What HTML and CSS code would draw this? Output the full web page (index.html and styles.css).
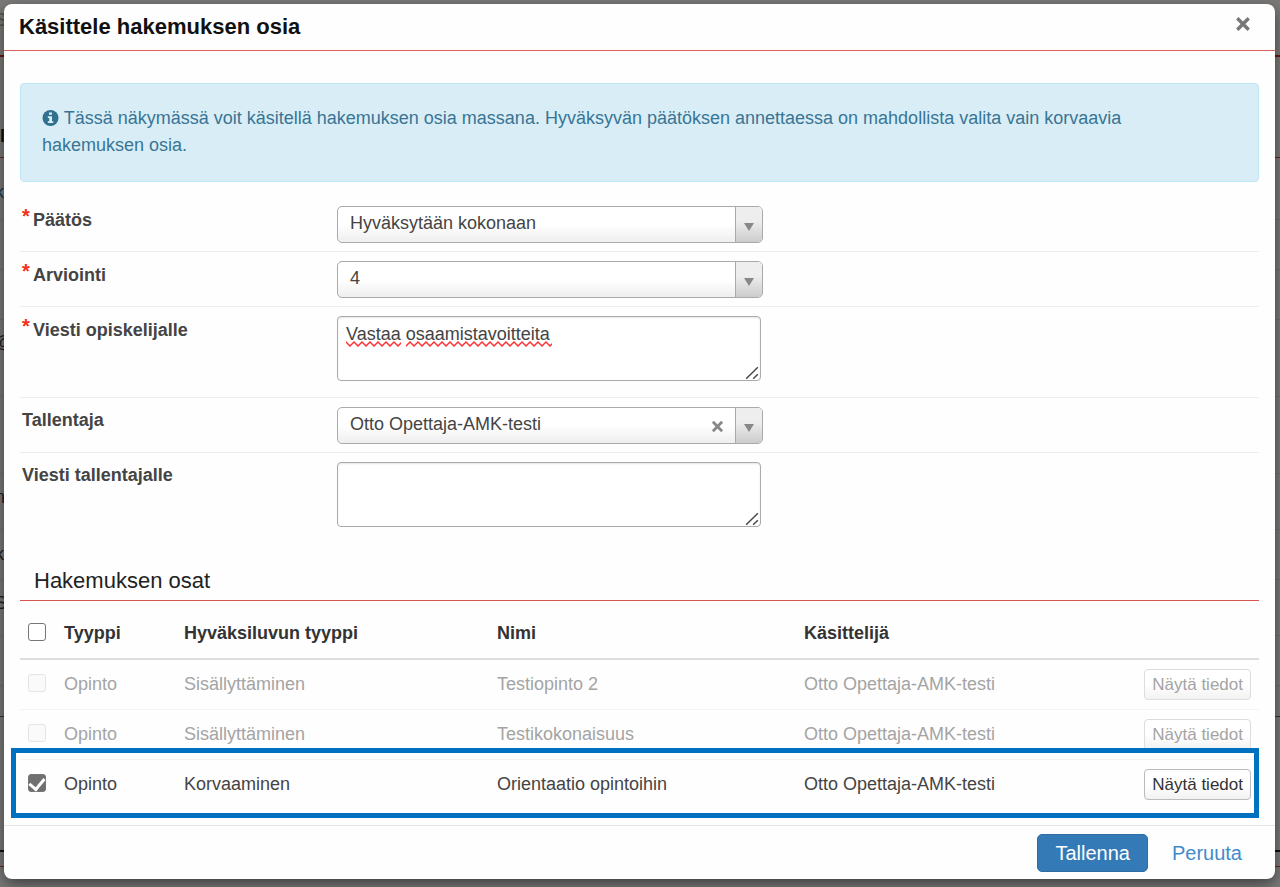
FILE: index.html
```html
<!DOCTYPE html>
<html lang="fi">
<head>
<meta charset="utf-8">
<meta name="viewport" content="width=device-width, initial-scale=1">
<title>Käsittele hakemuksen osia</title>
<link rel="stylesheet" href="styles.css">
</head>
<body>
<div class="page-behind" aria-hidden="true">
  <div class="behind-row behind-top">s</div>
  <div class="behind-row behind-title">I</div>
  <div class="behind-row behind-link">k</div>
  <div class="behind-row"></div>
  <div class="behind-row"></div>
  <div class="behind-row behind-tall">@</div>
  <div class="behind-row behind-tall">i</div>
  <div class="behind-row behind-text">n</div>
  <div class="behind-row">k</div>
  <div class="behind-row behind-text">S</div>
  <div class="behind-row"></div>
  <div class="behind-row behind-end"></div>
  <div class="behind-row behind-dark"></div>
  <div class="behind-row behind-red"></div>
</div>

<div class="modal" role="dialog" aria-labelledby="dialog-title">
  <header class="modal-header">
    <h1 class="modal-title" id="dialog-title">Käsittele hakemuksen osia</h1>
    <button class="icon-button" type="button" aria-label="Sulje">
      <svg class="cross" viewBox="0 0 14 14"><path d="M2 2L12 12M12 2L2 12"/></svg>
    </button>
  </header>

  <form class="modal-form">
    <div class="modal-body">
      <div class="alert">
        <svg class="info-icon" viewBox="0 0 16 16"><circle cx="8" cy="8" r="8"/><path d="M6.500 2.500h3v2.300h-3zM5.300 6.200h4.200v5h1.300v1.800h-5.500v-1.800h1.400v-3.200h-1.400z"/></svg>
        Tässä näkymässä voit käsitellä hakemuksen osia massana. Hyväksyvän päätöksen annettaessa on mahdollista valita vain korvaavia hakemuksen osia.
      </div>

      <div class="form-row">
        <label class="form-label" for="decision"><span class="required">*</span>Päätös</label>
        <div class="select-box">
          <select class="select" id="decision"><option>Hyväksytään kokonaan</option></select>
          <span class="select-arrow"></span>
        </div>
      </div>
      <div class="form-row">
        <label class="form-label" for="grade"><span class="required">*</span>Arviointi</label>
        <div class="select-box">
          <select class="select" id="grade"><option>4</option></select>
          <span class="select-arrow"></span>
        </div>
      </div>
      <div class="form-row form-row-text">
        <label class="form-label" for="student-message"><span class="required">*</span>Viesti opiskelijalle</label>
        <div class="text-box">
          <textarea class="textarea" id="student-message" spellcheck="false">Vastaa osaamistavoitteita</textarea>
          <svg class="spelling" aria-hidden="true">
            <defs><pattern id="wave" width="8" height="6" patternUnits="userSpaceOnUse"><path d="M-1 0L0 1L4 5L8 1L9 0"/></pattern></defs>
            <rect x="0" width="55" height="6" fill="url(#wave)"/>
            <rect x="60" width="146" height="6" fill="url(#wave)"/>
          </svg>
          <svg class="grip" viewBox="0 0 12 12" aria-hidden="true"><path d="M1 11L11 1M7 11L11 7"/></svg>
        </div>
      </div>
      <div class="form-row">
        <label class="form-label" for="recorder">Tallentaja</label>
        <div class="select-box">
          <select class="select" id="recorder"><option>Otto Opettaja-AMK-testi</option></select>
          <button class="icon-button select-clear" type="button" aria-label="Tyhjennä">
            <svg class="cross cross-small" viewBox="0 0 14 14"><path d="M2 2L12 12M12 2L2 12"/></svg>
          </button>
          <span class="select-arrow"></span>
        </div>
      </div>
      <div class="form-row form-row-text form-row-last">
        <label class="form-label" for="recorder-message">Viesti tallentajalle</label>
        <div class="text-box">
          <textarea class="textarea" id="recorder-message"></textarea>
          <svg class="grip" viewBox="0 0 12 12" aria-hidden="true"><path d="M1 11L11 1M7 11L11 7"/></svg>
        </div>
      </div>

      <h2 class="section-title">Hakemuksen osat</h2>
      <div class="table-box">
        <table class="parts">
          <colgroup><col class="col-check"><col class="col-type"><col class="col-kind"><col class="col-name"><col><col class="col-action"></colgroup>
          <thead>
            <tr><th><input class="check" type="checkbox" aria-label="Valitse kaikki"></th><th>Tyyppi</th><th>Hyväksiluvun tyyppi</th><th>Nimi</th><th>Käsittelijä</th><th></th></tr>
          </thead>
          <tbody>
            <tr class="disabled"><td><input class="check" type="checkbox" aria-label="Valitse Testiopinto 2" disabled></td><td>Opinto</td><td>Sisällyttäminen</td><td>Testiopinto 2</td><td>Otto Opettaja-AMK-testi</td><td class="action"><button class="small-button" type="button">Näytä tiedot</button></td></tr>
            <tr class="disabled"><td><input class="check" type="checkbox" aria-label="Valitse Testikokonaisuus" disabled></td><td>Opinto</td><td>Sisällyttäminen</td><td>Testikokonaisuus</td><td>Otto Opettaja-AMK-testi</td><td class="action"><button class="small-button" type="button">Näytä tiedot</button></td></tr>
            <tr><td><input class="check" type="checkbox" aria-label="Valitse Orientaatio opintoihin" checked></td><td>Opinto</td><td>Korvaaminen</td><td>Orientaatio opintoihin</td><td>Otto Opettaja-AMK-testi</td><td class="action"><button class="small-button" type="button">Näytä tiedot</button></td></tr>
          </tbody>
        </table>
        <div class="highlight"></div>
      </div>
    </div>

    <footer class="modal-footer">
      <button class="save" type="submit">Tallenna</button>
      <button class="cancel" type="button">Peruuta</button>
    </footer>
  </form>
</div>
</body>
</html>
```
FILE: styles.css
```css
* { box-sizing: border-box; }

body {
  margin: 0;
  min-height: 100vh;
  background: #7c7b7a;
  color: #444;
  font: 18px/27px "Liberation Sans", Arial, sans-serif;
  overflow: hidden;
}

button, select, textarea { font: inherit; color: inherit; }

/* Page seen around the dialog's edges */
.page-behind {
  position: absolute;
  inset: 0;
  display: flex;
  flex-direction: column;
  overflow: hidden;
}
.behind-row {
  flex: none;
  display: flex;
  align-items: center;
  height: 50px;
  color: #222;
  text-indent: -5px;
  border-bottom: 1px solid #71706f;
}
.behind-top { height: 57px; padding-bottom: 20px; color: #5c5448; font-size: 24px; border-bottom: 2px solid #6b1414; }
.behind-title { height: 101px; padding-top: 58px; color: #111; font-weight: bold; text-indent: 0; border-color: #6b2626; }
.behind-link { height: 62px; padding-top: 8px; color: #173c54; }
.behind-tall { height: 77px; padding-bottom: 31px; }
.behind-text { height: 56px; padding-bottom: 9px; }
.behind-end { height: 31px; border-color: #333; }
.behind-dark { height: 135px; border-bottom: 2px solid #111; }
.behind-red { height: 15px; border-color: #6b2626; }

.modal {
  position: relative;
  margin: 4px 5px 8px 4px;
  background: #fefefe;
  border-radius: 8px;
  box-shadow: 0 5px 15px rgba(0, 0, 0, .5);
}
.modal-header {
  display: flex;
  align-items: center;
  justify-content: space-between;
  height: 47px;
  padding: 0 24px 2px 15px;
  border-bottom: 1px solid #dd6262;
}
.modal-title { margin: 0; color: #111; font-size: 22px; font-weight: bold; }
.icon-button {
  display: flex;
  padding: 0;
  border: 0;
  background: none;
}
.modal-header .icon-button { margin-bottom: 4px; }
.cross { width: 16px; height: 16px; fill: none; stroke: #777; stroke-width: 3; }
.cross-small { width: 13px; height: 13px; stroke: #888; }

.modal-body { padding: 32px 16px 0; }
.alert {
  margin-bottom: 15px;
  padding: 21px 48px 22px 21px;
  border: 1px solid #bce8f1;
  border-radius: 4px;
  background: #d9edf7;
  color: #387594;
}
.info-icon { width: 17px; height: 16px; vertical-align: -2px; fill: #31708f; }
.info-icon path { fill: #d9edf7; }

.form-row {
  display: grid;
  grid-template-columns: 317px 426px;
  align-items: start;
  padding: 9px 0 8px;
  border-bottom: 1px solid #eee;
}
.form-row-text { padding-bottom: 16px; }
.form-row-last { padding-bottom: 0; border: 0; }
.form-label { padding-left: 2px; font-weight: bold; }
.required {
  display: inline-block;
  width: 11px;
  color: #f52d1c;
  font-size: 20px;
  line-height: 20px;
  vertical-align: 3px;
}
.select-box, .text-box { position: relative; }
.select-box { height: 37px; }
.select {
  width: 100%;
  height: 37px;
  padding: 0 60px 2px 12px;
  border: 1px solid #aaa;
  border-radius: 5px;
  appearance: none;
  background: linear-gradient(#fff 50%, #eee);
}
.select-arrow {
  position: absolute;
  top: 1px;
  right: 1px;
  bottom: 1px;
  display: flex;
  align-items: center;
  justify-content: center;
  width: 27px;
  padding-top: 5px;
  border-left: 1px solid #aaa;
  border-radius: 0 4px 4px 0;
  background: linear-gradient(#eee 40%, #ccc);
  pointer-events: none;
}
.select-arrow::after {
  content: "";
  border: 5px solid transparent;
  border-top: 8px solid #888;
  border-bottom: 0;
}
.select-clear { position: absolute; top: 13px; right: 39px; }
.textarea {
  display: block;
  width: calc(100% - 2px);
  height: 65px;
  padding: 4px 8px;
  border: 1px solid #aaa;
  border-radius: 4px;
  background: #fff;
  box-shadow: inset 0 1px 2px rgba(0, 0, 0, .1);
  resize: none;
}
.spelling { position: absolute; left: 9px; top: 25px; width: 210px; height: 6px; fill: none; pointer-events: none; }
.spelling path { stroke: #f33; stroke-width: 1.5; }
.grip { position: absolute; right: 4px; bottom: 1px; width: 14px; height: 14px; fill: none; stroke: #444; stroke-width: 1.2; }

.section-title {
  margin: 36px 0 0;
  padding: 4px 14px 6px;
  border-bottom: 1px solid #d9534f;
  color: #222;
  font-size: 22px;
  font-weight: normal;
}
.table-box { position: relative; padding-bottom: 16px; }
.parts { width: 100%; border-collapse: collapse; table-layout: fixed; }
.col-check { width: 36px; }
.col-type { width: 120px; }
.col-kind { width: 313px; }
.col-name { width: 307px; }
.col-action { width: 135px; }
.parts th, .parts td { padding: 0 8px; text-align: left; }
.parts th { height: 58px; padding-top: 7px; border-bottom: 2px solid #ddd; color: #333; }
.parts td { height: 50px; border-bottom: 1px solid #f4f4f4; }
.parts tr:last-child td { border-bottom: 0; }
.parts .action { text-align: right; }
.disabled > td:not(.action) { color: #a4a4a4; }
.check {
  display: grid;
  place-items: center;
  width: 18px;
  height: 18px;
  margin: 0 0 3px;
  border: 1px solid #767676;
  border-radius: 3px;
  appearance: none;
  background: #fff;
}
.check:disabled { border-color: #e4e4e4; background: #fafafa; }
.check:checked { background: #707070; }
.check:checked::after {
  content: "";
  width: 7px;
  height: 12px;
  margin-bottom: 3px;
  border: solid #fff;
  border-width: 0 3px 3px 0;
  transform: rotate(40deg);
}
.small-button {
  height: 31px;
  padding: 0 7px;
  border: 1px solid #bbb;
  border-radius: 4px;
  background: linear-gradient(#fff 50%, #f2f2f2);
  color: #333;
  font-size: 17px;
  white-space: nowrap;
}
.disabled .small-button { border-color: #ddd; color: #a4a4a4; }
/* Frame around the selected row */
.highlight {
  position: absolute;
  left: -9px;
  right: 0;
  bottom: 7px;
  height: 70px;
  border: 5px solid #0070c0;
  pointer-events: none;
}

.modal-footer {
  display: flex;
  justify-content: flex-end;
  gap: 6px;
  padding: 8px 15px 7px;
  border-top: 1px solid #e5e5e5;
  font-size: 20px;
}
.save, .cancel { height: 38px; padding: 0 17px; border: 1px solid transparent; border-radius: 5px; }
.save { background: #337ab7; border-color: #2e6da4; color: #fff; }
.cancel { background: none; color: #428bca; }
```
